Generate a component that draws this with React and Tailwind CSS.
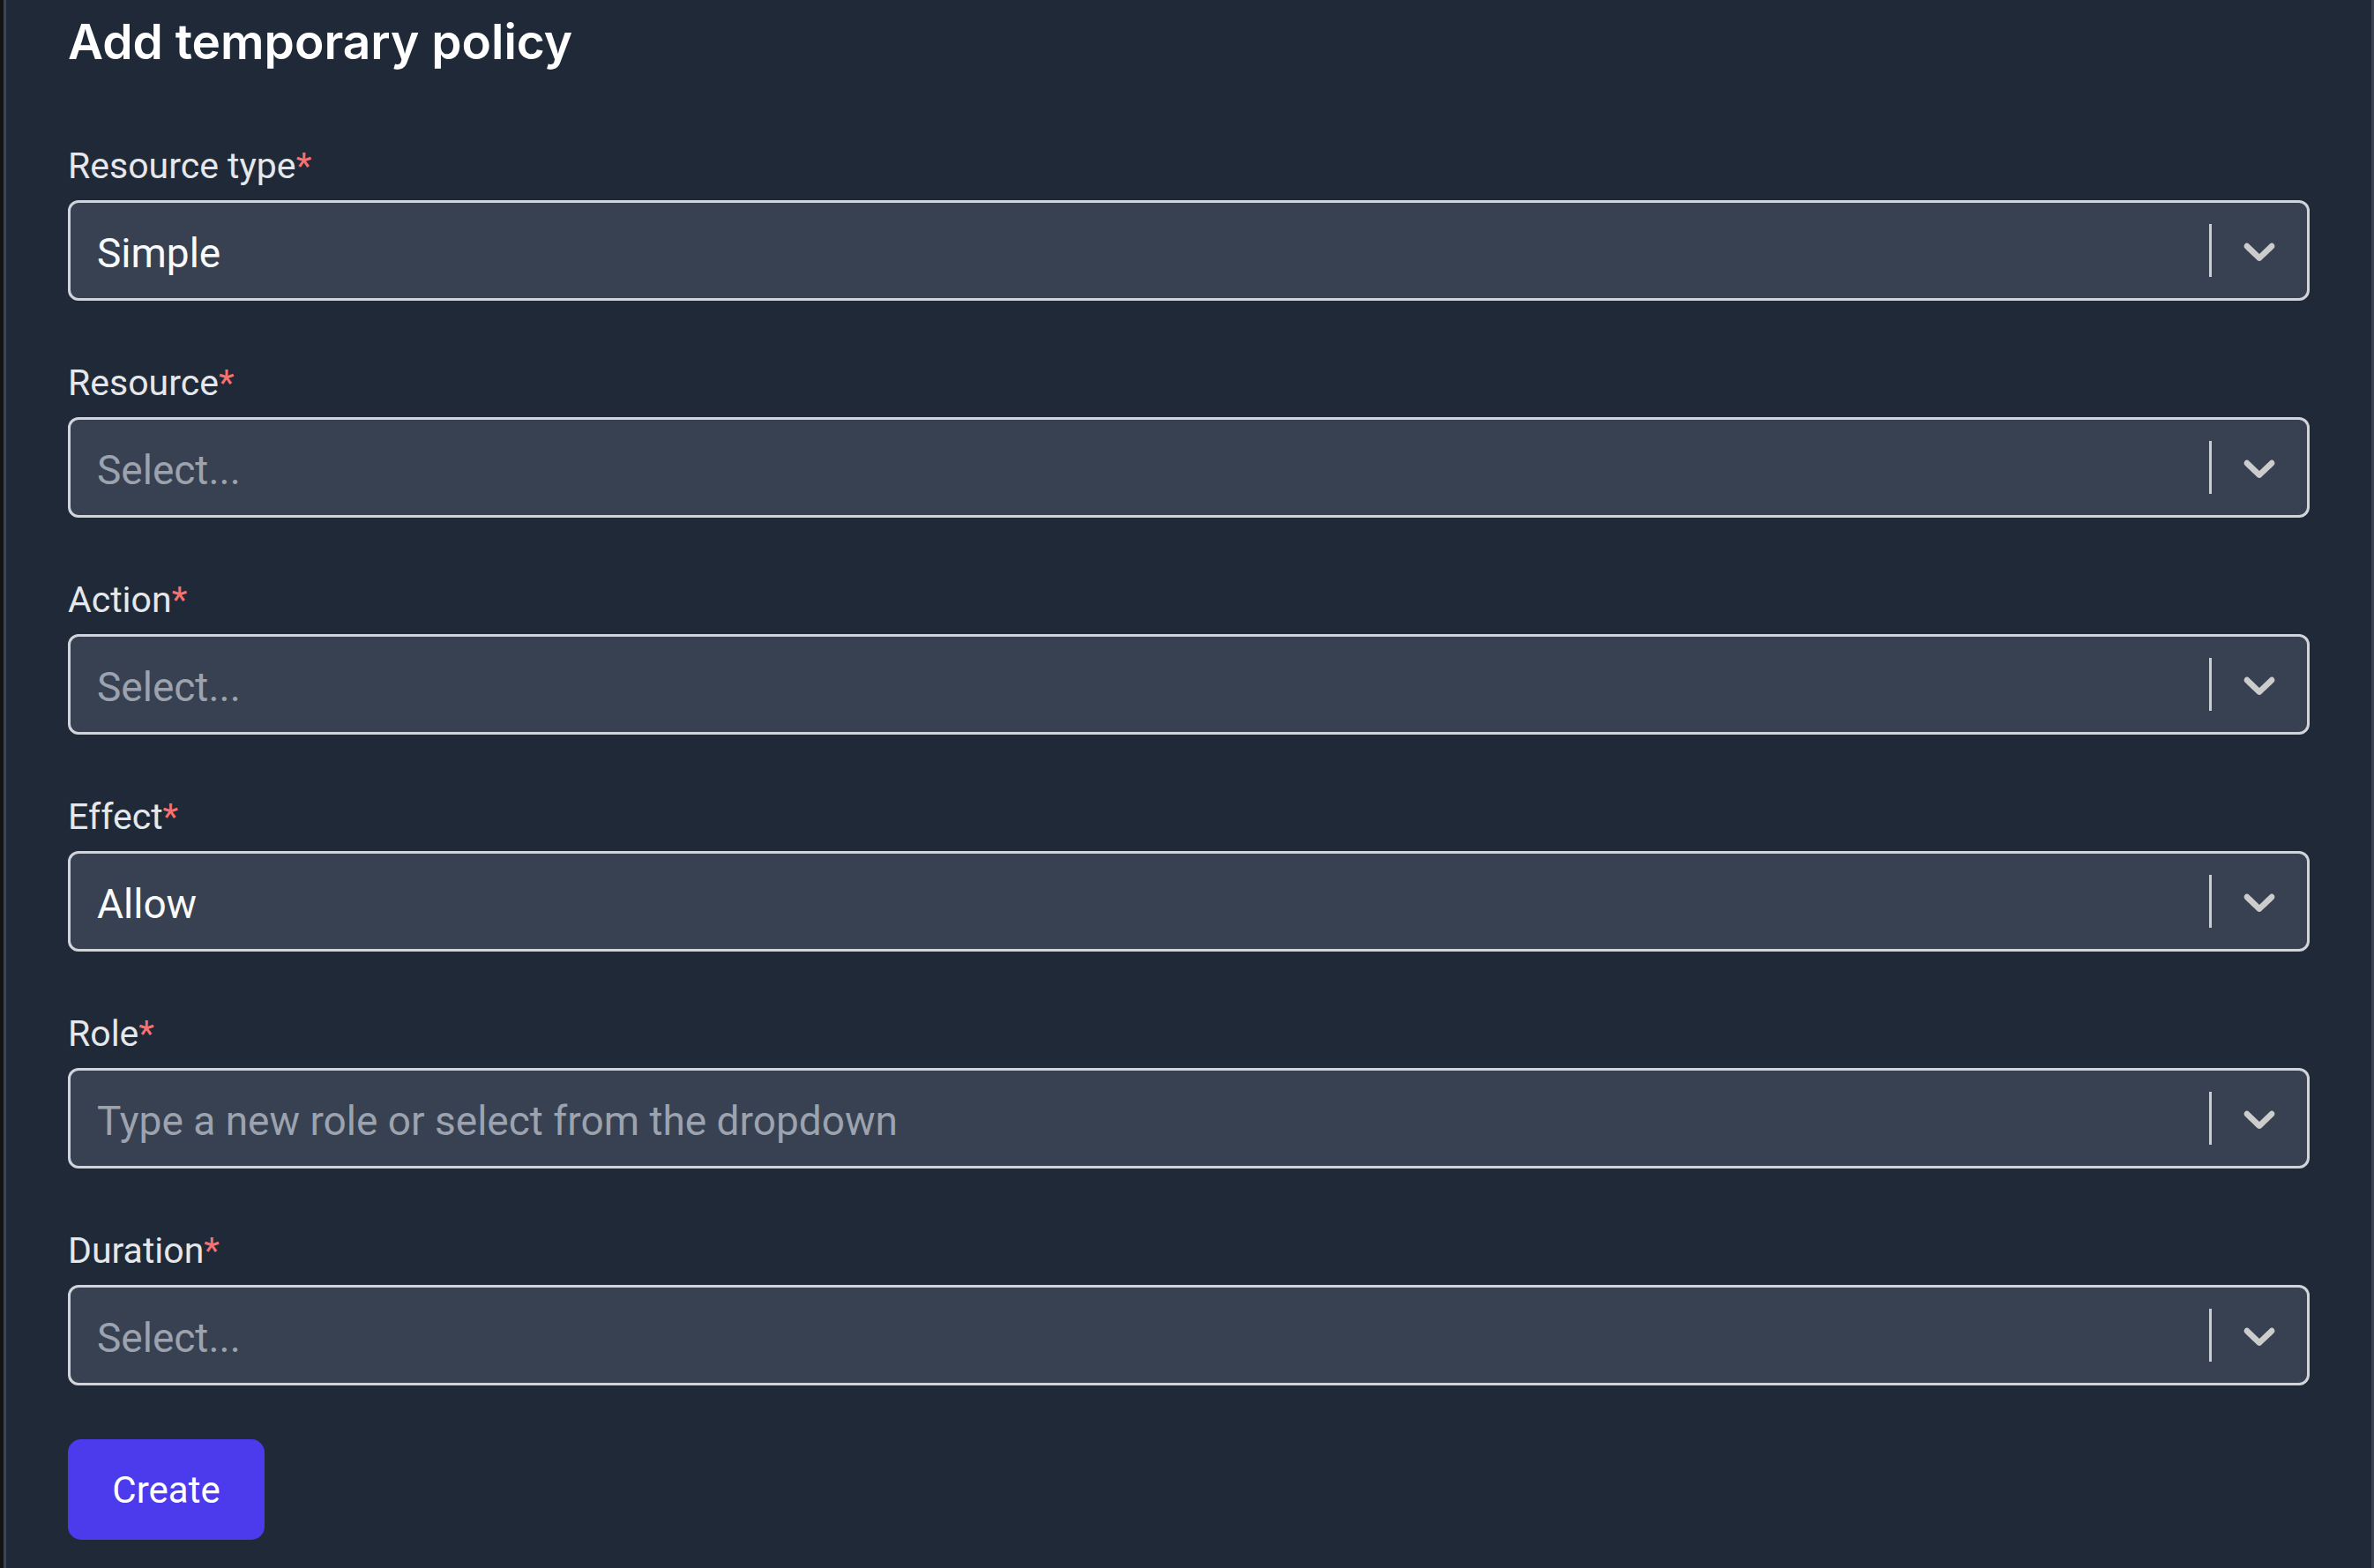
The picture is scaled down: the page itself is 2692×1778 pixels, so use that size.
import React from "react";

const fields = [
  { label: "Resource type", value: "Simple" },
  { label: "Resource", placeholder: "Select..." },
  { label: "Action", placeholder: "Select..." },
  { label: "Effect", value: "Allow" },
  { label: "Role", placeholder: "Type a new role or select from the dropdown" },
  { label: "Duration", placeholder: "Select..." },
];

const Chevron = () => (
  <svg viewBox="0 0 20 20" className="w-[60px] h-[60px] fill-[#cccccc]">
    <path d="M4.516 7.548c0.436-0.446 1.043-0.481 1.576 0l3.908 3.747 3.908-3.747c0.533-0.481 1.141-0.446 1.574 0 0.436 0.445 0.408 1.197 0 1.615-0.406 0.418-4.695 4.502-4.695 4.502-0.217 0.223-0.502 0.335-0.787 0.335s-0.57-0.112-0.789-0.335c0 0-4.287-4.084-4.695-4.502s-0.436-1.17 0-1.615z" />
  </svg>
);

const SelectBox = ({ value, placeholder }) => (
  <div className="flex items-center h-[114px] w-full rounded-[12px] border-[3px] border-[#d1d5db] bg-[#374151]">
    <div className="flex-1 pl-[30px] pt-[5px] text-[46px] leading-none font-['Roboto',sans-serif]">
      {value ? (
        <span className="text-[#f9fafb]">{value}</span>
      ) : (
        <span className="text-[#9ca3af]">{placeholder}</span>
      )}
    </div>
    <div className="w-[3px] h-[60px] bg-[#cccccc]" />
    <div className="flex items-center justify-center px-[24px]">
      <Chevron />
    </div>
  </div>
);

const App = () => {
  return (
    <div className="flex w-[2692px] h-[1778px] bg-[#141414] overflow-hidden">
      <div className="w-[4px]" />
      <div className="w-[3px] bg-[#3c4352]" />
      <div className="flex-1 bg-[#1f2937] px-[70px] pt-[15px]">
        <h2 className="text-[55px] leading-[64px] font-semibold text-white font-['Inter',sans-serif]">
          Add temporary policy
        </h2>

        <div className="mt-[85px] flex flex-col gap-[69px]">
          {fields.map((f) => (
            <div key={f.label} className="flex flex-col gap-[15px]">
              <label className="text-[41px] leading-[48px] text-[#e5e7eb] font-['Roboto',sans-serif]">
                {f.label}
                <span className="text-[#f87171]">*</span>
              </label>
              <SelectBox value={f.value} placeholder={f.placeholder} />
            </div>
          ))}
        </div>

        <button className="mt-[61px] w-[223px] h-[114px] rounded-[15px] bg-[#4c3bec] text-white text-[42px] font-['Roboto',sans-serif]">
          Create
        </button>
      </div>
      <div className="w-[3px] bg-[#3c4352]" />
    </div>
  );
};

export default App;
